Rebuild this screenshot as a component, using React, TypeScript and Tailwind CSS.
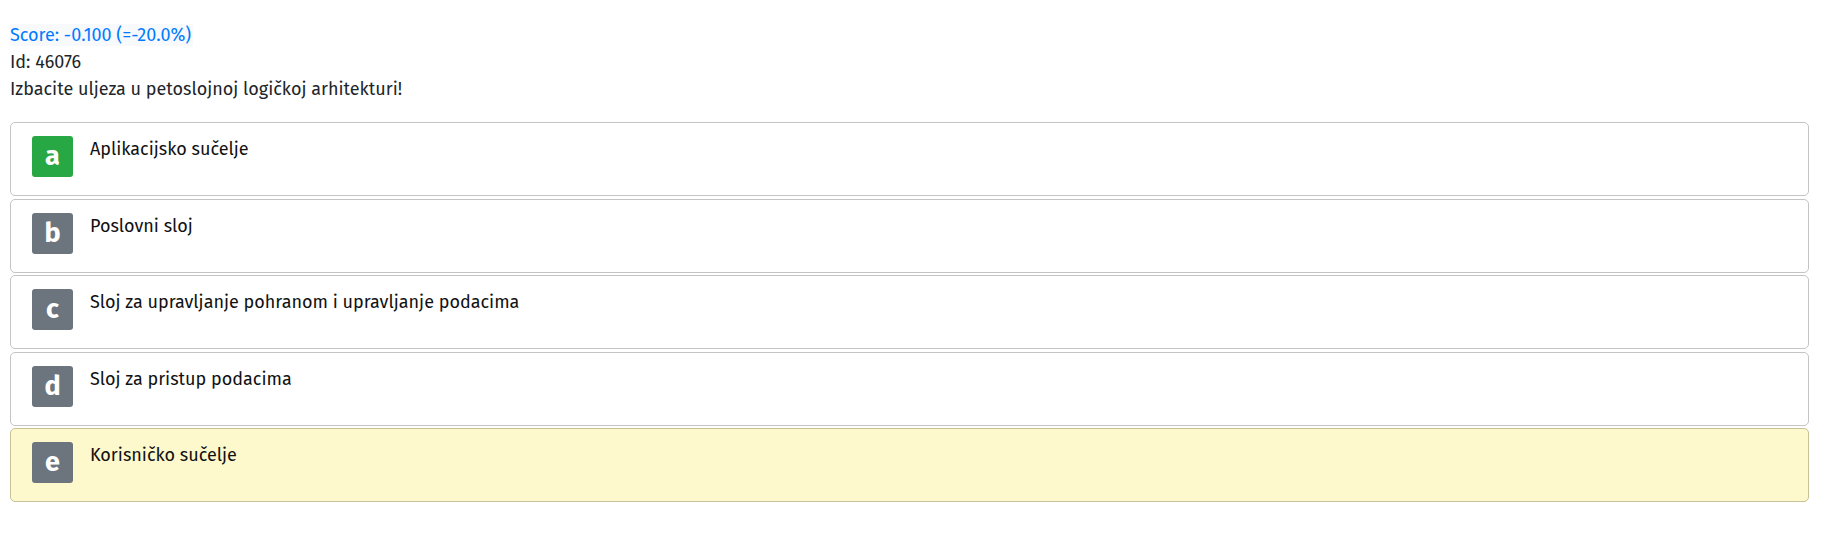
const options = [
  { letter: "a", text: "Aplikacijsko sučelje", correct: true },
  { letter: "b", text: "Poslovni sloj" },
  { letter: "c", text: "Sloj za upravljanje pohranom i upravljanje podacima" },
  { letter: "d", text: "Sloj za pristup podacima" },
  { letter: "e", text: "Korisničko sučelje", selected: true },
];

export default function App() {
  return (
    <div
      className="min-h-screen bg-white pl-[10px] pr-[13px] pt-[22px] text-[18px] leading-[27px] text-[#212529]"
      style={{ fontFamily: '"Fira Sans", "Noto Sans", sans-serif' }}
    >
      <div>
        <span className="bg-[#f8f9fa] pr-[2px] text-[#007bff]">Score: -0.100 (=-20.0%)</span>
      </div>
      <div>Id: 46076</div>
      <div>Izbacite uljeza u petoslojnoj logičkoj arhitekturi!</div>

      <div className="mt-[19px] flex flex-col gap-[2.5px]">
        {options.map((o) => (
          <div
            key={o.letter}
            className={
              "flex h-[74px] items-start rounded-[5px] border pl-[21px] pt-[13px] " +
              (o.selected ? "border-[#c6c196] bg-[#fef8cd]" : "border-[#c4c4c4] bg-white")
            }
          >
            <div
              className={
                "flex h-[41px] w-[41px] shrink-0 items-center justify-center rounded-[3px] text-[27px] font-bold leading-none text-white " +
                (o.correct ? "bg-[#28a745]" : "bg-[#6c757d]")
              }
            >
              {o.letter}
            </div>
            <div className="ml-[17px] text-[18px] leading-[27px] text-[#111]">{o.text}</div>
          </div>
        ))}
      </div>
    </div>
  );
}
